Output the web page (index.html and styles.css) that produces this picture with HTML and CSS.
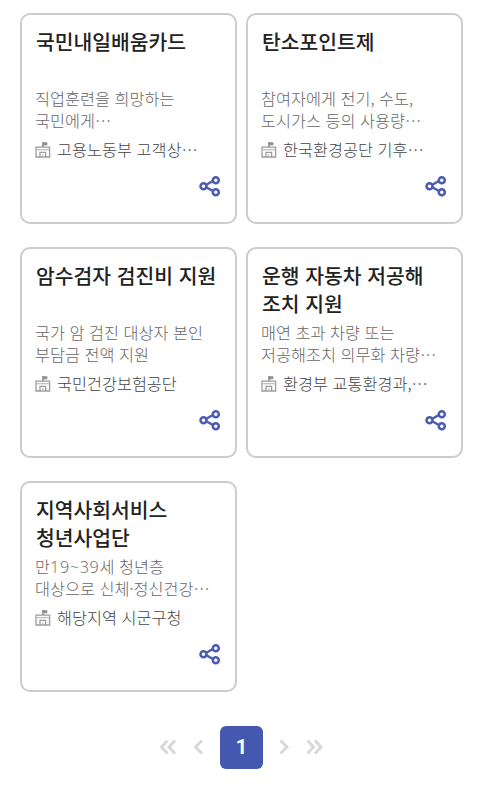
FILE: index.html
```html
<!DOCTYPE html>
<html lang="ko">
<head>
    <meta charset="UTF-8">
    <meta name="viewport" content="width=device-width, initial-scale=1.0">
    <title>지원 서비스</title>
    <link rel="stylesheet" href="styles.css">
</head>
<body>
<svg class="symbols" width="0" height="0">
    <symbol id="building" viewBox="0 0 16 17">
        <path d="M8 6V1M8 2h3.5v1.5H8" fill="none" stroke="#909090" stroke-width="1.7"/>
        <path d="M1 6.2h13.6V16H1zM5 16v-4.6h5.6V16" fill="none" stroke="#9c9c9c" stroke-width="1.3"/>
        <path d="M1 8.7h13.6" stroke="#bbb" stroke-width="1.2"/>
        <path d="M7.8 13v3" stroke="#bbb" stroke-width="1"/>
    </symbol>
    <symbol id="share" viewBox="0 0 22 22">
        <path d="M5 11l11-6.1M5 11l11 6.1" stroke="#5060b2" stroke-width="2.5"/>
        <g fill="#fff" stroke="#4a5bb2" stroke-width="2.5">
            <circle cx="4.5" cy="11.2" r="3"/>
            <circle cx="16.8" cy="5.2" r="3"/>
            <circle cx="16.8" cy="17.3" r="3"/>
        </g>
    </symbol>
</svg>

<ul class="card-list">
    <li class="card">
        <h3 class="card-title">국민내일배움카드</h3>
        <p class="card-desc">직업훈련을 희망하는<br>국민에게⋯</p>
        <p class="card-org"><svg class="org-icon"><use href="#building"/></svg><span>고용노동부 고객상⋯</span></p>
        <a href="#" class="share"><svg class="share-icon"><use href="#share"/></svg></a>
    </li>
    <li class="card">
        <h3 class="card-title">탄소포인트제</h3>
        <p class="card-desc">참여자에게 전기, 수도,<br>도시가스 등의 사용량⋯</p>
        <p class="card-org"><svg class="org-icon"><use href="#building"/></svg><span>한국환경공단 기후⋯</span></p>
        <a href="#" class="share"><svg class="share-icon"><use href="#share"/></svg></a>
    </li>
    <li class="card">
        <h3 class="card-title">암수검자 검진비 지원</h3>
        <p class="card-desc">국가 암 검진 대상자 본인<br>부담금 전액 지원</p>
        <p class="card-org"><svg class="org-icon"><use href="#building"/></svg><span>국민건강보험공단</span></p>
        <a href="#" class="share"><svg class="share-icon"><use href="#share"/></svg></a>
    </li>
    <li class="card">
        <h3 class="card-title">운행 자동차 저공해<br>조치 지원</h3>
        <p class="card-desc">매연 초과 차량 또는<br>저공해조치 의무화 차량⋯</p>
        <p class="card-org"><svg class="org-icon"><use href="#building"/></svg><span>환경부 교통환경과,⋯</span></p>
        <a href="#" class="share"><svg class="share-icon"><use href="#share"/></svg></a>
    </li>
    <li class="card">
        <h3 class="card-title">지역사회서비스<br>청년사업단</h3>
        <p class="card-desc">만<span class="num">19~39</span>세 청년층<br>대상으로 신체·정신건강⋯</p>
        <p class="card-org"><svg class="org-icon"><use href="#building"/></svg><span>해당지역 시군구청</span></p>
        <a href="#" class="share"><svg class="share-icon"><use href="#share"/></svg></a>
    </li>
</ul>

<div class="paging">
    <a href="#" class="page-first"><svg width="18" height="16" viewBox="0 0 18 16"><path d="M7.5 1.5L1.5 8l6 6.5M15 1.5L9 8l6 6.5"/></svg></a>
    <a href="#" class="page-prev"><svg width="10" height="16" viewBox="0 0 10 16"><path d="M8 1.5L1.5 8 8 14.5"/></svg></a>
    <strong class="page-current">1</strong>
    <a href="#" class="page-next"><svg width="10" height="16" viewBox="0 0 10 16"><path d="M1.5 1.5L8 8l-6.5 6.5"/></svg></a>
    <a href="#" class="page-last"><svg width="18" height="16" viewBox="0 0 18 16"><path d="M2.5 1.5l6 6.5-6 6.5M10 1.5L16 8l-6 6.5"/></svg></a>
</div>
</body>
</html>
```
FILE: styles.css
```css
* {
    box-sizing: border-box;
    margin: 0;
    padding: 0;
}

body {
    background-color: #fff;
    font-family: "Noto Sans CJK KR", sans-serif;
    color: #333;
}

a {
    text-decoration: none;
}

svg {
    display: block;
}

.symbols {
    position: absolute;
}

.card-list {
    display: grid;
    grid-template-columns: 217px 217px;
    gap: 23px 9px;
    padding: 13px 20px 0;
    list-style: none;
}

.card {
    display: flex;
    flex-direction: column;
    height: 211px;
    padding: 12px 14px 0 13px;
    border: 2px solid #ccc;
    border-radius: 10px;
    white-space: nowrap;
}

.card-title {
    height: 56px;
    padding-left: 1px;
    color: #222;
    font-size: 20.4px;
    font-weight: 500;
    line-height: 28px;
}

.card-desc {
    height: 44px;
    margin-top: 4px;
    font-size: 16.3px;
    font-weight: 300;
    line-height: 22px;
    color: #666;
}

.num {
    font-family: "Open Sans", "Noto Sans CJK KR", sans-serif;
    letter-spacing: 0.6px;
    line-height: 1;
}

.card-org {
    display: flex;
    align-items: center;
    gap: 6px;
    height: 24px;
    margin-top: 6px;
    font-size: 16.3px;
    font-weight: 300;
    color: #444;
}

.org-icon {
    width: 16px;
    height: 17px;
}

.share {
    align-self: flex-end;
    margin-top: 14px;
}

.share-icon {
    width: 22px;
    height: 22px;
}

.paging {
    display: flex;
    justify-content: center;
    align-items: center;
    gap: 16px;
    margin-top: 34px;
}

.paging path {
    fill: none;
    stroke: #d6d7da;
    stroke-width: 2.8;
}

.paging svg {
    margin-top: -1px;
}

.page-current {
    width: 43px;
    height: 43px;
    border-radius: 6px;
    background-color: #4458b0;
    color: #fff;
    font-family: Roboto, sans-serif;
    font-size: 20px;
    font-weight: 700;
    line-height: 43px;
    text-align: center;
}
```
